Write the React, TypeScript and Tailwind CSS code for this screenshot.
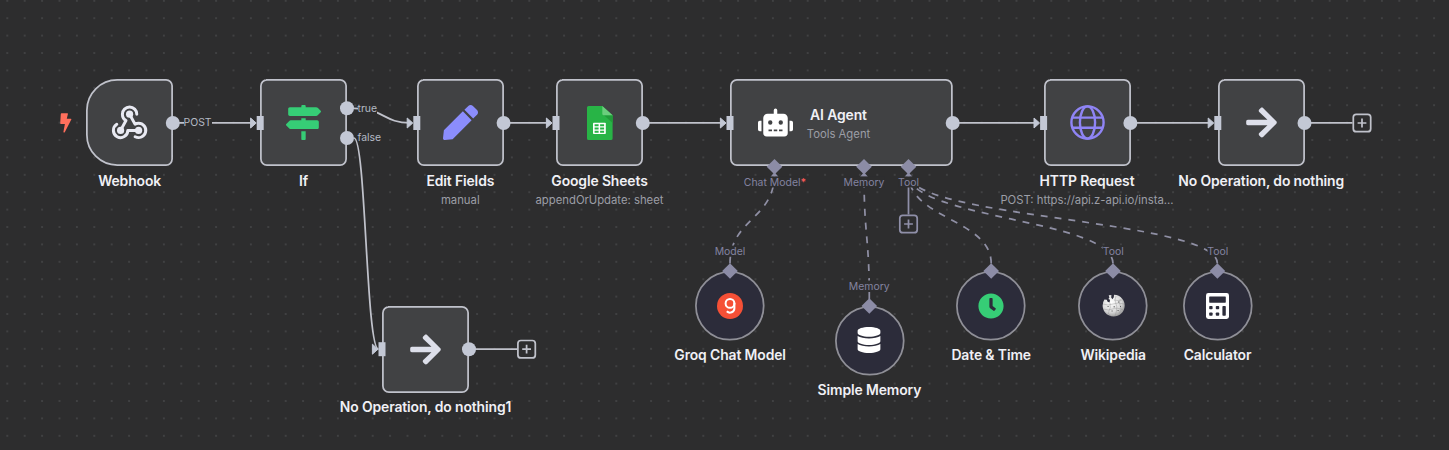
import type { CSSProperties, ReactNode } from "react";
import { FaArrowRight, FaClock, FaDatabase, FaMapSigns, FaPen, FaRobot } from "react-icons/fa";

const at = (left: number, top: number): CSSProperties => ({ left, top });

function BoltIcon() {
  return (
    <svg width="12" height="20" viewBox="0 0 12 20" className="absolute top-[113.2px] left-[60.2px]" fill="#ff6f5c">
      <path d="M1.5 .2H7.4q.7 0 .5.8L6.8 5.7H10.8q1 0 .5.9L4.9 18.9q-.5.8-1.2.5-.4-.2-.2-.9L4.9 11H1q-.9 0-.8-.8L.8.9Q.9.2 1.5.2Z" />
    </svg>
  );
}

function WebhookIcon() {
  return (
    <svg width="43.2" height="43.2" viewBox="0 0 24 24" className="shrink-0 -translate-y-[1.2px]" fill="none" stroke="#e9eaf3" strokeWidth="1.65" strokeLinecap="round" strokeLinejoin="round">
      <path d="M4.876 13.61a4 4 0 1 0 6.124 3.39h6" />
      <path d="M15.066 20.502a4 4 0 1 0 1.934 -7.502c-.706 0 -1.424 .179 -2 .5l-3 -5.5" />
      <path d="M16 8a4 4 0 1 0 -8 0c0 1.506 .77 2.818 2 3.5l-3 5.5" />
      <g fill="#e9eaf3" stroke="none">
        <circle cx="12" cy="8" r="2" />
        <circle cx="7" cy="17" r="2" />
        <circle cx="17" cy="17" r="2" />
      </g>
    </svg>
  );
}

function SheetsIcon() {
  return (
    <svg width="26" height="34" viewBox="0 0 26 34" className="shrink-0">
      <path d="M1.6 0H15.3L25.6 9.3V32.4a1.6 1.6 0 0 1-1.6 1.6H1.6a1.6 1.6 0 0 1-1.6-1.6V1.6A1.6 1.6 0 0 1 1.6 0Z" fill="#28b446" />
      <path d="M17 9.3H25.6V17Z" fill="#219b39" />
      <path d="M15.3 0L25.6 9.3H16.8a1.5 1.5 0 0 1-1.5-1.5Z" fill="#6ace7c" />
      <rect x="6" y="16.7" width="12.8" height="11.4" rx="0.8" fill="#fff" />
      <path d="M7.6 18.3h4v2h-4zM13.1 18.3h4v2h-4zM7.6 21.5h4v2h-4zM13.1 21.5h4v2h-4zM7.6 24.7h4v2h-4zM13.1 24.7h4v2h-4z" fill="#28b446" />
    </svg>
  );
}

function GlobeIcon() {
  return (
    <svg width="35" height="35" viewBox="0 0 35 35" className="shrink-0" fill="none" stroke="#8f84f5" strokeWidth="2.4">
      <circle cx="17.5" cy="17.5" r="16.1" />
      <ellipse cx="17.5" cy="17.5" rx="7.6" ry="16.1" />
      <path d="M2.3 12.6H32.7M2.3 22.7H32.7" />
    </svg>
  );
}

function GroqIcon() {
  return (
    <svg width="26" height="26" viewBox="0 0 26 26" className="shrink-0">
      <circle cx="13" cy="13" r="13" fill="#f55036" />
      <circle cx="13" cy="10.4" r="4.4" fill="none" stroke="#fff" strokeWidth="2" />
      <path d="M17.4 9.8V15.2a4.4 4.4 0 0 1-7.6 3" fill="none" stroke="#fff" strokeWidth="2" />
    </svg>
  );
}

function WikipediaIcon() {
  return (
    <svg width="23" height="23" viewBox="0 0 23 23" className="shrink-0">
      <defs>
        <radialGradient id="wiki" cx="0.4" cy="0.35" r="0.75">
          <stop offset="0" stopColor="#fff" />
          <stop offset="0.6" stopColor="#d8d8d8" />
          <stop offset="1" stopColor="#858585" />
        </radialGradient>
      </defs>
      <path d="M6.7 1.3L7.4 3.4 6.4 5 8 5.7 7.6 8.6 5.6 7.8 4.8 5.8 2.4 5.6A11 11 0 1 0 14.5 .9L12 .7 11.8 3.2 10.4 5.2 9.2 3.4 9.4 1Z" fill="url(#wiki)" />
      <g fill="none" stroke="#909090" strokeWidth="0.4">
        <path d="M14 2q-2 4 0 8t-1 12M18.4 5q-2 3.5 0 7t-1 7M8 9q1 5-1 8t2 5" />
        <path d="M1 10q5 2 10 0t11 0M1.5 15q5 2 9 0t11 1M12 6q4 1 8 0" />
      </g>
      <path d="M5.5 12.5h1.2M11.5 12.8h1.5M16 8h1.2M9.5 17h1.2M15.5 16.5h1.2M18 12.5h1" stroke="#484848" strokeWidth="0.8" />
    </svg>
  );
}

function CalculatorIcon() {
  return (
    <svg width="23" height="26" viewBox="0 0 23 26" className="shrink-0">
      <rect width="23" height="26" rx="2.4" fill="#fff" />
      <g fill="#2c2c3a">
        <rect x="3.2" y="3.4" width="16.6" height="6.3" rx="0.6" />
        <rect x="3.2" y="13" width="3.4" height="3.3" rx="0.8" />
        <rect x="9.8" y="13" width="3.4" height="3.3" rx="0.8" />
        <rect x="3.2" y="19.4" width="3.4" height="3.3" rx="0.8" />
        <rect x="9.8" y="19.4" width="3.4" height="3.3" rx="0.8" />
        <rect x="16.4" y="13" width="3.4" height="9.7" rx="0.8" />
      </g>
    </svg>
  );
}

const titleClass = "text-[13.92px] leading-[19px] font-semibold tracking-[-0.12px] text-[#f0f0f5]";
const subtitleClass = "text-[11.3px] leading-[19px] text-[#9c9ea6]";

function Caption({ title, subtitle }: { title: string; subtitle?: string }) {
  return (
    <div className="absolute top-full left-1/2 flex -translate-x-1/2 flex-col items-center pt-[5.5px] whitespace-nowrap">
      <span className={titleClass}>{title}</span>
      {subtitle && <span className={subtitleClass}>{subtitle}</span>}
    </div>
  );
}

interface NodeProps {
  x: number;
  y?: number;
  title: string;
  subtitle?: string;
  trigger?: boolean;
  children: ReactNode;
}

function BoxNode({ x, y = 79.4, title, subtitle, trigger, children }: NodeProps) {
  return (
    <div className="absolute size-[87px]" style={at(x, y)}>
      <svg width="87" height="87" className="absolute inset-0">
        <path
          d={trigger
            ? "M31.3 .87H80.1a6 6 0 0 1 6 6V80.1a6 6 0 0 1-6 6H31.3A30.4 30.4 0 0 1 .87 55.7V31.3A30.4 30.4 0 0 1 31.3 .87Z"
            : "M6.9 .87H80.1a6 6 0 0 1 6 6V80.1a6 6 0 0 1-6 6H6.9a6 6 0 0 1-6-6V6.9a6 6 0 0 1 6-6Z"}
          fill="#414244"
          stroke="#c0c2cb"
          strokeWidth="1.74"
        />
      </svg>
      <div className="relative flex size-full items-center justify-center">{children}</div>
      <Caption title={title} subtitle={subtitle} />
    </div>
  );
}

function RoundNode({ x, y = 270.8, title, children }: NodeProps) {
  return (
    <div className="absolute size-[69.6px]" style={at(x - 34.7, y)}>
      <svg width="70" height="70" className="absolute inset-0">
        <circle cx="34.8" cy="34.8" r="33.9" fill="#2c2c3a" stroke="#8f8f97" strokeWidth="1.74" />
      </svg>
      <div className="relative flex size-full items-center justify-center">{children}</div>
      <Caption title={title} />
    </div>
  );
}

function PortLabel({ x, y, text, required }: { x: number; y: number; text: string; required?: boolean }) {
  return (
    <div className="absolute flex h-[11px] -translate-x-1/2 -translate-y-1/2 items-center bg-[#2d2d2e] text-[10.44px] whitespace-nowrap text-[#8383a0]" style={at(x, y)}>
      {text}
      {required && <span className="font-semibold text-[#f45959]">*</span>}
    </div>
  );
}

function EdgeLabel({ x, y, text }: { x: number; y: number; text: string }) {
  return (
    <div className="absolute flex h-[12px] -translate-y-1/2 items-center bg-[#2d2d2e] text-[10.44px] whitespace-nowrap text-[#b4b9c4]" style={at(x, y)}>
      {text}
    </div>
  );
}

const wires = [
  "M173 122.9H252",
  "M354 108.3C383.5 108.3 383.5 122.9 410 122.9",
  "M354 138C366 138 366 349.2 378.5 349.2",
  "M504 122.9H549",
  "M643 122.9H723",
  "M953 122.9H1036",
  "M1130 122.9H1210",
  "M1304 122.9H1352.5",
  "M469 349.2H517",
];

const toolWires = [
  "M730 263.5C730 219 774.5 219 774.5 174",
  "M869.3 299C869.3 236 864 236 864 174",
  "M991.2 263.5C991.2 219 908.5 219 908.5 174",
  "M1113 263.5C1113 219 908.5 219 908.5 174",
  "M1217.4 263.5C1217.4 219 908.5 219 908.5 174",
];

const inputs = [[260.2, 123], [416.8, 123], [556, 123], [730, 123], [1043.6, 123], [1217.8, 123], [382, 349.2]];
const outputs = [[172.8, 123], [347, 108.3], [347, 138], [503.6, 123], [642.8, 123], [952.7, 123], [1130.4, 123], [1304.5, 123], [469, 349.2]];
const diamonds = [[774.5, 166.7], [864, 166.7], [908.5, 166.7], [730, 271], [869.3, 306], [991.2, 271], [1113, 271], [1217.4, 271]];
const adders = [[1362, 123, "#c0c2cb"], [526.6, 349.2, "#c0c2cb"], [908.5, 224, "#8f8fa8"]] as const;

export default function App() {
  return (
    <main className="relative h-[450px] w-[1449px] overflow-hidden bg-[#2d2d2e] font-['Inter',sans-serif]">
      <svg width="1449" height="450" className="absolute inset-0">
        <defs>
          <pattern id="grid" x="-1.4" y="9.5" width="17.4" height="17.4" patternUnits="userSpaceOnUse">
            <circle cx="8.7" cy="8.7" r="0.7" fill="#5c5d60" />
          </pattern>
        </defs>
        <rect width="1449" height="450" fill="url(#grid)" />
        <g fill="none" stroke="#c0c2cb" strokeWidth="1.74">
          {wires.map((d) => <path key={d} d={d} />)}
        </g>
        <g fill="none" stroke="#8f8fa4" strokeWidth="1.74" strokeDasharray="6.96 6.96">
          {toolWires.map((d) => <path key={d} d={d} />)}
        </g>
        <path d="M908.5 174V214.5" stroke="#8f8fa8" strokeWidth="1.74" />
      </svg>

      <BoltIcon />

      <BoxNode x={86.1} title="Webhook" trigger><WebhookIcon /></BoxNode>
      <BoxNode x={260.1} title="If"><FaMapSigns className="size-[35px] text-[#36cd76]" /></BoxNode>
      <BoxNode x={416.8} title="Edit Fields" subtitle="manual"><FaPen className="size-[35px] text-[#8b8dfc]" /></BoxNode>
      <BoxNode x={556} title="Google Sheets" subtitle="appendOrUpdate: sheet"><SheetsIcon /></BoxNode>

      <section className="absolute h-[87px] w-[223px]" style={at(730, 79.4)}>
        <svg width="223" height="87" className="absolute inset-0">
          <rect x="0.87" y="0.87" width="221" height="85.2" rx="6" fill="#414244" stroke="#c0c2cb" strokeWidth="1.74" />
        </svg>
        <div className="relative flex h-full items-center pl-[27.5px]">
          <FaRobot className="size-[35px] text-white" />
          <div className="ml-[14px] flex w-[64px] flex-col items-center pt-[4px] whitespace-nowrap">
            <span className={titleClass}>AI Agent</span>
            <span className={subtitleClass}>Tools Agent</span>
          </div>
        </div>
      </section>

      <BoxNode x={1043.5} title="HTTP Request" subtitle="POST: https://api.z-api.io/insta..."><GlobeIcon /></BoxNode>
      <BoxNode x={1217.7} title="No Operation, do nothing"><FaArrowRight className="size-[35px] text-[#dddfea]" /></BoxNode>
      <BoxNode x={382} y={305.7} title="No Operation, do nothing1"><FaArrowRight className="size-[35px] text-[#dddfea]" /></BoxNode>

      <RoundNode x={730} title="Groq Chat Model"><GroqIcon /></RoundNode>
      <RoundNode x={869.3} y={305.7} title="Simple Memory"><FaDatabase className="size-[26px] text-white" /></RoundNode>
      <RoundNode x={991.1} title="Date & Time"><FaClock className="size-[26px] text-[#36cd76]" /></RoundNode>
      <RoundNode x={1113.1} title="Wikipedia"><WikipediaIcon /></RoundNode>
      <RoundNode x={1217.4} title="Calculator"><CalculatorIcon /></RoundNode>

      <svg width="1449" height="450" className="absolute inset-0">
        <g fill="#c3c8d5">
          {inputs.map(([x, y]) => (
            <g key={`${x}-${y}`}>
              <rect x={x - 3.5} y={y - 7} width="7" height="14" />
              <path d={`M${x - 9.6} ${y - 5}L${x - 4} ${y}L${x - 9.6} ${y + 5}Z`} stroke="#c3c8d5" strokeLinejoin="round" />
            </g>
          ))}
          {outputs.map(([x, y]) => <circle key={`${x}-${y}`} cx={x} cy={y} r="7" />)}
        </g>
        <g fill="#8c8ca6">
          {diamonds.map(([x, y]) => (
            <path key={x} d={`M${x} ${y - 7.8}L${x + 7.8} ${y}L${x} ${y + 7.8}L${x - 7.8} ${y}Z`} />
          ))}
          {diamonds.slice(0, 3).map(([x, y]) => (
            <path key={x} d={`M${x} ${y + 5.5}L${x + 4} ${y + 10}H${x - 4}Z`} />
          ))}
        </g>
        {adders.map(([x, y, color]) => (
          <g key={x} stroke={color} strokeWidth="1.74">
            <rect x={x - 8.7} y={y - 8.7} width="17.4" height="17.4" rx="3" fill="#2d2d2e" />
            <path d={`M${x - 4.4} ${y}H${x + 4.4}M${x} ${y - 4.4}V${y + 4.4}`} />
          </g>
        ))}
      </svg>

      <EdgeLabel x={183.5} y={122.5} text="POST" />
      <EdgeLabel x={357.5} y={108.5} text="true" />
      <EdgeLabel x={357.5} y={137.5} text="false" />
      <PortLabel x={775} y={182.3} text="Chat Model" required />
      <PortLabel x={864} y={182.3} text="Memory" />
      <PortLabel x={908.5} y={182.3} text="Tool" />
      <PortLabel x={730} y={251.3} text="Model" />
      <PortLabel x={869.3} y={286.3} text="Memory" />
      <PortLabel x={1113.3} y={251.3} text="Tool" />
      <PortLabel x={1217.8} y={251.3} text="Tool" />
    </main>
  );
}
